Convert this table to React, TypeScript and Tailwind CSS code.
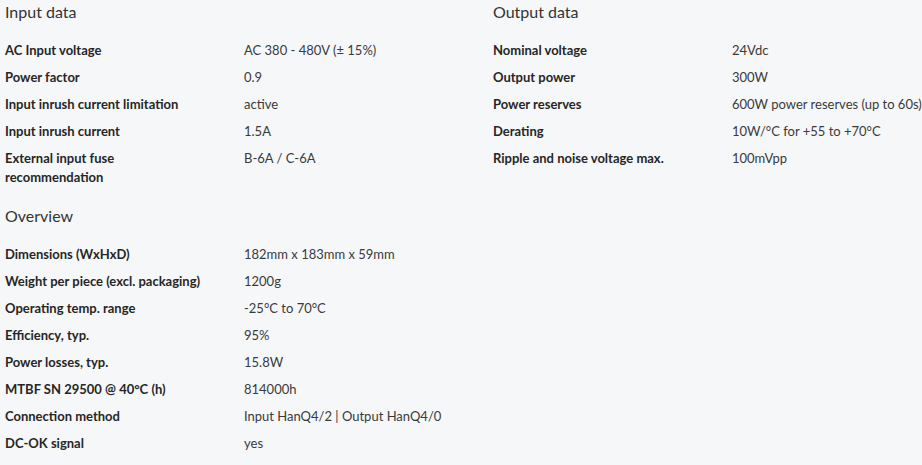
import React from "react";

type Row = [string, string];

const input: Row[] = [
  ["AC Input voltage", "AC 380 - 480V (± 15%)"],
  ["Power factor", "0.9"],
  ["Input inrush current limitation", "active"],
  ["Input inrush current", "1.5A"],
  ["External input fuse recommendation", "B-6A / C-6A"],
];

const output: Row[] = [
  ["Nominal voltage", "24Vdc"],
  ["Output power", "300W"],
  ["Power reserves", "600W power reserves (up to 60s)"],
  ["Derating", "10W/°C for +55 to +70°C"],
  ["Ripple and noise voltage max.", "100mVpp"],
];

const overview: Row[] = [
  ["Dimensions (WxHxD)", "182mm x 183mm x 59mm"],
  ["Weight per piece (excl. packaging)", "1200g"],
  ["Operating temp. range", "-25°C to 70°C"],
  ["Efficiency, typ.", "95%"],
  ["Power losses, typ.", "15.8W"],
  ["MTBF SN 29500 @ 40°C (h)", "814000h"],
  ["Connection method", "Input HanQ4/2 | Output HanQ4/0"],
  ["DC-OK signal", "yes"],
];

function Section({ title, rows }: { title: string; rows: Row[] }) {
  return (
    <div className="w-[488px] shrink-0">
      <h2 className="text-[16px] leading-[24px] text-[#333] font-normal">{title}</h2>
      <div className="mt-[13px] flex flex-col">
        {rows.map(([k, v]) => (
          <div key={k} className="flex py-[4px] text-[13px] leading-[19px]">
            <div className="w-[239px] shrink-0 pr-[30px] font-bold text-[#262626]">{k}</div>
            <div className="text-[#3a3a3a] whitespace-nowrap">{v}</div>
          </div>
        ))}
      </div>
    </div>
  );
}

export default function App() {
  return (
    <div
      className="min-h-[465px] w-full overflow-hidden bg-[#f6f7f9] pl-[5px]"
      style={{ fontFamily: "Lato, 'Open Sans', sans-serif" }}
    >
      <div className="flex">
        <Section title="Input data" rows={input} />
        <Section title="Output data" rows={output} />
      </div>
      <div className="mt-[13px]">
        <Section title="Overview" rows={overview} />
      </div>
    </div>
  );
}
